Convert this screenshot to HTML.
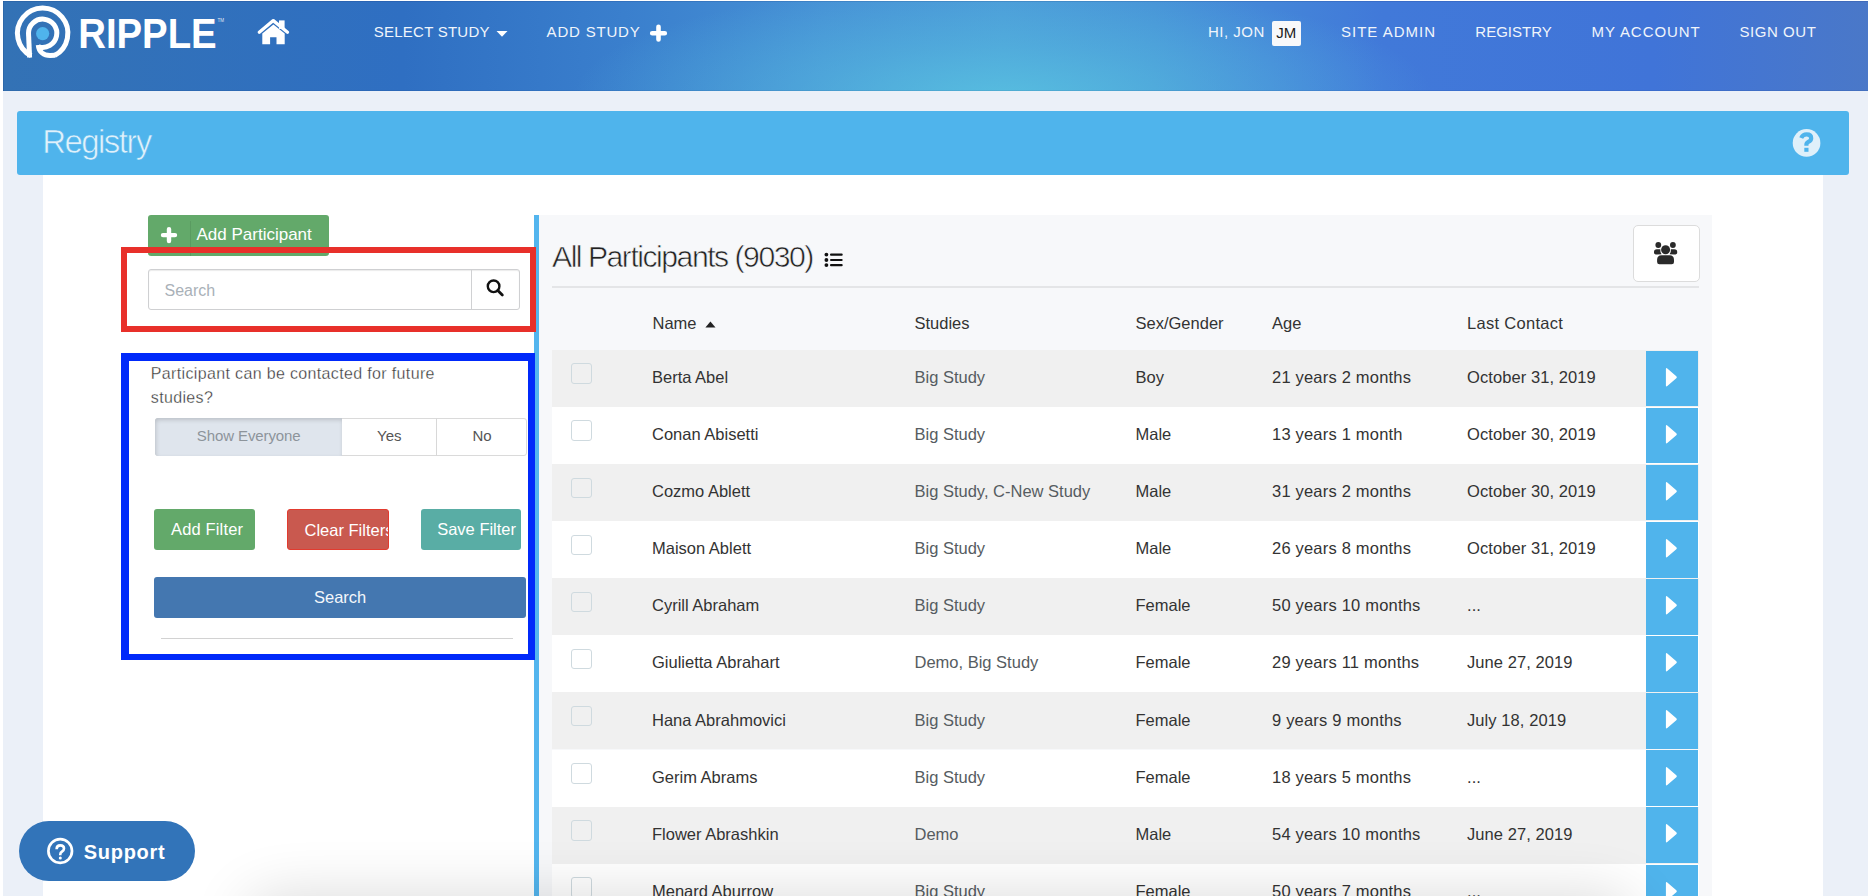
<!DOCTYPE html>
<html><head><meta charset="utf-8">
<style>
*{margin:0;padding:0;box-sizing:border-box}
html,body{width:1868px;height:896px;overflow:hidden;background:#fff;font-family:"Liberation Sans",sans-serif}
.a{position:absolute}
#pagebg{left:3px;top:90px;width:1865px;height:806px;background:#ebf0f8}
#hdr{left:3px;top:1px;width:1865px;height:89.5px;box-shadow:inset 0 1px 0 rgba(0,20,80,0.12),inset 1px 0 0 rgba(0,20,80,0.1),inset 0 -1px 0 rgba(0,20,80,0.08);
 background:
  radial-gradient(ellipse 430px 115px at 1000px 96px, rgba(88,192,224,0.9), rgba(88,192,224,0.45) 45%, rgba(88,192,224,0) 100%),
  linear-gradient(90deg,#3372b5 0px,#2f6fc2 400px,#3a7fcd 620px,#4690d5 820px,#4b9ad8 1000px,#4792d7 1150px,#4179d9 1380px,#4074d8 1650px,#4a78c8 1868px);}
.nav{color:#f0f5fb;font-size:15px;white-space:nowrap;top:23.4px;line-height:18px}
#reg{left:17px;top:111px;width:1832px;height:64px;background:#4fb4ec;border-radius:3px}
#regt{left:42.2px;top:123.2px;font-size:33px;color:#dff1fb;line-height:38px;letter-spacing:-1.55px;white-space:nowrap;-webkit-text-stroke:0.6px #4fb4ec}
#wpanel{left:43px;top:175px;width:1780px;height:721px;background:#fff}
#tpanel{left:539px;top:215px;width:1173px;height:681px;background:#f7f8fa}
#bline{left:534px;top:215px;width:4.5px;height:681px;background:#53b5ee}
#title{left:552px;top:238.6px;font-size:30.2px;line-height:36px;color:#222;letter-spacing:-1.5px;white-space:nowrap;-webkit-text-stroke:0.6px #f7f8fa}
#sep{left:552px;top:286px;width:1147px;height:1.5px;background:#e4e5e7}
#grp{left:1632.5px;top:225px;width:67px;height:57px;background:#fff;border:1px solid #dcdcdc;border-radius:5px}
.th{position:absolute;top:312.7px;font-size:16.5px;line-height:20px;color:#333;white-space:nowrap}
.row{left:552px;width:1147px;height:57.1px}
.odd{background:#f0f0f0}
.even{background:#fff}
.cb{position:absolute;left:19px;top:13.6px;width:20.5px;height:20.5px;border:1px solid #cfdadf;border-radius:3px;background:transparent}
.td{position:absolute;top:17.15px;font-size:16.5px;line-height:20px;color:#333;white-space:nowrap}
.st{color:#565c61}
.arr{position:absolute;left:1094px;top:0.9px;width:52px;height:55.6px;background:#50b4ec}
.arr svg{position:absolute;left:0;top:0}
/* left panel */
#addp{left:147.5px;top:214.7px;width:181.3px;height:41.1px;background:#63a96a;border-radius:3px}
#addp .dv{position:absolute;left:42px;top:6px;width:1px;height:35px;background:#5a9b61}
#addpt{left:196.5px;top:225.3px;font-size:17px;line-height:20px;color:#fff;white-space:nowrap}
#sinput{left:147.5px;top:269.3px;width:372.3px;height:41px;background:#fff;border:1px solid #cfd0d2;border-radius:3px;box-shadow:inset 0 1px 1px rgba(0,0,0,0.08)}
#sinput .dv{position:absolute;left:322px;top:0;width:1px;height:39px;background:#d0d1d3}
#sph{left:164.5px;top:281.1px;font-size:16px;line-height:20px;color:#a9b1b8;white-space:nowrap}
#redbox{left:121px;top:247px;width:414.7px;height:85.4px;border:6.2px solid #e8302a}
#bluebox{left:121.3px;top:352.8px;width:413.5px;height:307px;border:8px solid #0029fa;border-bottom-width:6.5px;border-right-width:7px}
#q1{left:150.8px;top:362.2px;font-size:16px;line-height:23.9px;color:#333;letter-spacing:0.35px;width:330px;-webkit-text-stroke:0.3px #fff}
#tg{left:155.3px;top:417.6px;width:372px;height:38.6px;border:1px solid #dadada;border-radius:3px;background:#fff}
#tg1{left:155.3px;top:417.6px;width:186.3px;height:38.6px;background:#dfe5ed;border-radius:3px 0 0 3px;box-shadow:inset 1px 2px 4px rgba(0,0,0,0.16)}
#tgd{left:436px;top:418px;width:1px;height:37.5px;background:#d8d8d8}
.tgt{position:absolute;top:426.9px;font-size:15px;line-height:18px;white-space:nowrap}
.btn{position:absolute;top:508.9px;height:41.1px;border-radius:3px}
.btnt{position:absolute;top:518.8px;font-size:16.5px;line-height:20px;color:#fff;white-space:nowrap}
#srch{left:153.9px;top:576.8px;width:372.6px;height:40.9px;background:#4477b0;border-radius:3px}
#srcht{left:314px;top:587px;font-size:16.5px;line-height:20px;color:#f4f7fb;white-space:nowrap}
#hr{left:161.4px;top:637.5px;width:351.2px;height:1.2px;background:#d2d2d2}
#support{left:18.6px;top:821.2px;width:176.6px;height:59.7px;background:#3274b9;border-radius:30px}
#supt{left:83.8px;top:839.6px;font-size:20px;font-weight:bold;line-height:24px;color:#fff;letter-spacing:0.7px;white-space:nowrap}
#shadow{left:260px;top:912px;width:1360px;height:30px;border-radius:30px;pointer-events:none;box-shadow:0 0 60px 14px rgba(0,0,0,0.16)}

</style></head><body>
<div class="a" id="pagebg"></div>
<div class="a" id="hdr"></div>
<svg class="a" style="left:0;top:0" width="300" height="70" viewBox="0 0 300 70">
 <g fill="none" stroke="#fff" stroke-width="5">
  <path d="M31.2 55.75 A25.2 25.2 0 1 1 54.5 55.55"/>
  <path d="M28.5 33.3 A14.15 14.15 0 1 1 38.5 46.8"/>
  <path d="M28.5 33 L29.6 57.5"/>
  <path d="M38.3 45 C38.8 52, 44 55.6, 50 55.6 L55 55.2"/>
 </g>
 <circle cx="42.65" cy="33.6" r="6.6" fill="#4fb4ec"/>
 <text x="78.2" y="47.5" font-family="Liberation Sans" font-weight="bold" font-size="42.5" fill="#fff" textLength="138.5" lengthAdjust="spacingAndGlyphs">RIPPLE</text>
 <text x="217.5" y="21.5" font-family="Liberation Sans" font-size="4.6" fill="#fff" fill-opacity="0.85">TM</text>
 <g fill="#fff">
  <path d="M259.3 32.2 L273.3 20.6 L287.5 32.2" fill="none" stroke="#fff" stroke-width="3.3" stroke-linecap="round" stroke-linejoin="round"/>
  <rect x="279" y="20.4" width="5.6" height="8.5"/>
  <path d="M262.3 33.4 L273.4 24.4 L284.7 33.4 V44.2 H276.5 V37.3 H270.1 V44.2 H262.3 Z"/>
 </g>
</svg>
<div class="a nav" style="left:373.7px;letter-spacing:0.25px">SELECT STUDY</div>
<svg class="a" style="left:0;top:0" width="700" height="60"><path d="M496.5 31 H507.5 L502 36.8 Z" fill="#fff"/>
 <path d="M658.5 26.8 V39.5 M652.2 33.2 H664.8" stroke="#fff" stroke-width="4.6" stroke-linecap="round"/></svg>
<div class="a nav" style="left:546.6px;letter-spacing:0.8px">ADD STUDY</div>
<div class="a nav" style="left:1208px;letter-spacing:0.5px">HI, JON</div>
<div class="a" style="left:1271.8px;top:20.7px;width:29.7px;height:25.5px;background:#f8f8fa;border-radius:2px"></div>
<div class="a" style="left:1276.3px;top:23.7px;font-size:15px;line-height:18px;color:#1b1b1b">JM</div>
<div class="a nav" style="left:1341px;letter-spacing:1px">SITE ADMIN</div>
<div class="a nav" style="left:1475.3px">REGISTRY</div>
<div class="a nav" style="left:1591.5px;letter-spacing:0.95px">MY ACCOUNT</div>
<div class="a nav" style="left:1739.5px;letter-spacing:0.55px">SIGN OUT</div>

<div class="a" id="reg"></div>
<div class="a" id="regt">Registry</div>
<svg class="a" style="left:1780px;top:115px" width="60" height="60" viewBox="1780 115 60 60">
 <circle cx="1806.55" cy="142.95" r="13.85" fill="#dff0fa"/>
 <path d="M1801.2 138 Q1802.8 134.4 1806.6 134.4 Q1811.2 134.4 1811.2 138.2 Q1811.2 140.4 1808.3 141.9 Q1806.4 142.9 1806.4 144.8 V145.8" fill="none" stroke="#4fb4ec" stroke-width="4.2"/>
 <rect x="1804.3" y="147.8" width="4.2" height="4" fill="#4fb4ec"/>
</svg>
<div class="a" id="wpanel"></div>
<div class="a" id="tpanel"></div>
<div class="a" id="bline"></div>
<div class="a" id="title">All Participants (9030)</div>
<svg class="a" style="left:820px;top:248px" width="30" height="24" viewBox="820 248 30 24">
 <g fill="#111"><circle cx="826.4" cy="254.6" r="1.9"/><circle cx="826.4" cy="260" r="1.9"/><circle cx="826.4" cy="265.1" r="1.9"/>
 <rect x="830" y="253.5" width="12.7" height="2.2" rx="1"/><rect x="830" y="258.9" width="12.7" height="2.2" rx="1"/><rect x="830" y="264" width="12.7" height="2.2" rx="1"/></g>
</svg>
<div class="a" id="grp"></div>
<svg class="a" style="left:1645px;top:236px" width="40" height="36" viewBox="1645 236 40 36" fill="#2a2a2a">
 <circle cx="1665.6" cy="249.8" r="4.5"/>
 <path d="M1657.1 262 V259.8 Q1657.1 255.2 1661.6 255.2 H1669.6 Q1674 255.2 1674 259.8 V262 Q1674 264.3 1671.7 264.3 H1659.4 Q1657.1 264.3 1657.1 262 Z"/>
 <circle cx="1658.3" cy="245" r="2.9"/><circle cx="1672.9" cy="245" r="2.9"/>
 <path d="M1654 252.8 V251.8 Q1654 249.2 1656.8 249.2 H1660.3 Q1660 252.3 1661.6 254.3 L1657 254.6 Q1654 254.6 1654 252.8 Z"/>
 <path d="M1677.2 252.8 V251.8 Q1677.2 249.2 1674.4 249.2 H1670.9 Q1671.2 252.3 1669.6 254.3 L1674.2 254.6 Q1677.2 254.6 1677.2 252.8 Z"/>
</svg>
<div class="a" id="sep"></div>
<div class="th" style="left:652.5px">Name</div>
<svg class="a" style="left:700px;top:315px" width="20" height="16"><path d="M5.4 12.5 H15.5 L10.45 6.4 Z" fill="#222"/></svg>
<div class="th" style="left:914.5px">Studies</div>
<div class="th" style="left:1135.5px">Sex/Gender</div>
<div class="th" style="left:1272px">Age</div>
<div class="th" style="left:1467px;letter-spacing:0.3px">Last Contact</div>
<div class="a row odd" style="top:349.80px"><div class="cb"></div><div class="td" style="left:100px">Berta Abel</div><div class="td st" style="left:362.5px">Big Study</div><div class="td" style="left:583.5px">Boy</div><div class="td" style="left:720px;letter-spacing:0.2px">21 years 2 months</div><div class="td" style="left:915px;letter-spacing:0.08px">October 31, 2019</div><div class="arr"><svg width="52" height="56" viewBox="0 0 52 56"><path d="M19.9 18 Q19.9 16.3 21.3 17.4 L30.3 25.3 Q31.5 26.3 30.3 27.3 L21.3 35.1 Q19.9 36.3 19.9 34.5 Z" fill="#fff"/></svg></div></div>
<div class="a row even" style="top:406.90px"><div class="cb"></div><div class="td" style="left:100px">Conan Abisetti</div><div class="td st" style="left:362.5px">Big Study</div><div class="td" style="left:583.5px">Male</div><div class="td" style="left:720px;letter-spacing:0.2px">13 years 1 month</div><div class="td" style="left:915px;letter-spacing:0.08px">October 30, 2019</div><div class="arr"><svg width="52" height="56" viewBox="0 0 52 56"><path d="M19.9 18 Q19.9 16.3 21.3 17.4 L30.3 25.3 Q31.5 26.3 30.3 27.3 L21.3 35.1 Q19.9 36.3 19.9 34.5 Z" fill="#fff"/></svg></div></div>
<div class="a row odd" style="top:464.00px"><div class="cb"></div><div class="td" style="left:100px">Cozmo Ablett</div><div class="td st" style="left:362.5px">Big Study, C-New Study</div><div class="td" style="left:583.5px">Male</div><div class="td" style="left:720px;letter-spacing:0.2px">31 years 2 months</div><div class="td" style="left:915px;letter-spacing:0.08px">October 30, 2019</div><div class="arr"><svg width="52" height="56" viewBox="0 0 52 56"><path d="M19.9 18 Q19.9 16.3 21.3 17.4 L30.3 25.3 Q31.5 26.3 30.3 27.3 L21.3 35.1 Q19.9 36.3 19.9 34.5 Z" fill="#fff"/></svg></div></div>
<div class="a row even" style="top:521.10px"><div class="cb"></div><div class="td" style="left:100px">Maison Ablett</div><div class="td st" style="left:362.5px">Big Study</div><div class="td" style="left:583.5px">Male</div><div class="td" style="left:720px;letter-spacing:0.2px">26 years 8 months</div><div class="td" style="left:915px;letter-spacing:0.08px">October 31, 2019</div><div class="arr"><svg width="52" height="56" viewBox="0 0 52 56"><path d="M19.9 18 Q19.9 16.3 21.3 17.4 L30.3 25.3 Q31.5 26.3 30.3 27.3 L21.3 35.1 Q19.9 36.3 19.9 34.5 Z" fill="#fff"/></svg></div></div>
<div class="a row odd" style="top:578.20px"><div class="cb"></div><div class="td" style="left:100px">Cyrill Abraham</div><div class="td st" style="left:362.5px">Big Study</div><div class="td" style="left:583.5px">Female</div><div class="td" style="left:720px;letter-spacing:0.2px">50 years 10 months</div><div class="td" style="left:915px;letter-spacing:0.08px">...</div><div class="arr"><svg width="52" height="56" viewBox="0 0 52 56"><path d="M19.9 18 Q19.9 16.3 21.3 17.4 L30.3 25.3 Q31.5 26.3 30.3 27.3 L21.3 35.1 Q19.9 36.3 19.9 34.5 Z" fill="#fff"/></svg></div></div>
<div class="a row even" style="top:635.30px"><div class="cb"></div><div class="td" style="left:100px">Giulietta Abrahart</div><div class="td st" style="left:362.5px">Demo, Big Study</div><div class="td" style="left:583.5px">Female</div><div class="td" style="left:720px;letter-spacing:0.2px">29 years 11 months</div><div class="td" style="left:915px;letter-spacing:0.08px">June 27, 2019</div><div class="arr"><svg width="52" height="56" viewBox="0 0 52 56"><path d="M19.9 18 Q19.9 16.3 21.3 17.4 L30.3 25.3 Q31.5 26.3 30.3 27.3 L21.3 35.1 Q19.9 36.3 19.9 34.5 Z" fill="#fff"/></svg></div></div>
<div class="a row odd" style="top:692.40px"><div class="cb"></div><div class="td" style="left:100px">Hana Abrahmovici</div><div class="td st" style="left:362.5px">Big Study</div><div class="td" style="left:583.5px">Female</div><div class="td" style="left:720px;letter-spacing:0.2px">9 years 9 months</div><div class="td" style="left:915px;letter-spacing:0.08px">July 18, 2019</div><div class="arr"><svg width="52" height="56" viewBox="0 0 52 56"><path d="M19.9 18 Q19.9 16.3 21.3 17.4 L30.3 25.3 Q31.5 26.3 30.3 27.3 L21.3 35.1 Q19.9 36.3 19.9 34.5 Z" fill="#fff"/></svg></div></div>
<div class="a row even" style="top:749.50px"><div class="cb"></div><div class="td" style="left:100px">Gerim Abrams</div><div class="td st" style="left:362.5px">Big Study</div><div class="td" style="left:583.5px">Female</div><div class="td" style="left:720px;letter-spacing:0.2px">18 years 5 months</div><div class="td" style="left:915px;letter-spacing:0.08px">...</div><div class="arr"><svg width="52" height="56" viewBox="0 0 52 56"><path d="M19.9 18 Q19.9 16.3 21.3 17.4 L30.3 25.3 Q31.5 26.3 30.3 27.3 L21.3 35.1 Q19.9 36.3 19.9 34.5 Z" fill="#fff"/></svg></div></div>
<div class="a row odd" style="top:806.60px"><div class="cb"></div><div class="td" style="left:100px">Flower Abrashkin</div><div class="td st" style="left:362.5px">Demo</div><div class="td" style="left:583.5px">Male</div><div class="td" style="left:720px;letter-spacing:0.2px">54 years 10 months</div><div class="td" style="left:915px;letter-spacing:0.08px">June 27, 2019</div><div class="arr"><svg width="52" height="56" viewBox="0 0 52 56"><path d="M19.9 18 Q19.9 16.3 21.3 17.4 L30.3 25.3 Q31.5 26.3 30.3 27.3 L21.3 35.1 Q19.9 36.3 19.9 34.5 Z" fill="#fff"/></svg></div></div>
<div class="a row even" style="top:863.70px"><div class="cb"></div><div class="td" style="left:100px">Menard Aburrow</div><div class="td st" style="left:362.5px">Big Study</div><div class="td" style="left:583.5px">Female</div><div class="td" style="left:720px;letter-spacing:0.2px">50 years 7 months</div><div class="td" style="left:915px;letter-spacing:0.08px">...</div><div class="arr"><svg width="52" height="56" viewBox="0 0 52 56"><path d="M19.9 18 Q19.9 16.3 21.3 17.4 L30.3 25.3 Q31.5 26.3 30.3 27.3 L21.3 35.1 Q19.9 36.3 19.9 34.5 Z" fill="#fff"/></svg></div></div>

<div class="a" id="addp"><div class="dv"></div></div>
<svg class="a" style="left:155px;top:220px" width="30" height="30" viewBox="155 220 30 30"><path d="M169 229.1 V241.1 M163 235.1 H175" stroke="#fff" stroke-width="4.4" stroke-linecap="round"/></svg>
<div class="a" id="addpt">Add Participant</div>
<div class="a" id="sinput"><div class="dv"></div></div>
<div class="a" id="sph">Search</div>
<svg class="a" style="left:480px;top:272px" width="30" height="30" viewBox="480 272 30 30"><circle cx="493.6" cy="286.3" r="5.8" fill="none" stroke="#111" stroke-width="2.4"/><path d="M497.8 290.5 L502.3 295" stroke="#111" stroke-width="2.8" stroke-linecap="round"/></svg>
<div class="a" id="redbox"></div>

<div class="a" id="q1">Participant can be contacted for future studies?</div>
<div class="a" id="tg"></div>
<div class="a" id="tg1"></div>
<div class="a" id="tgd"></div>
<div class="tgt" style="left:196.8px;color:#8d949b;letter-spacing:-0.1px">Show Everyone</div>
<div class="tgt" style="left:377px;color:#555">Yes</div>
<div class="tgt" style="left:472.5px;color:#555">No</div>
<div class="btn" style="left:153.9px;width:101.3px;background:#63a96a"></div>
<div class="btnt" style="left:171px;letter-spacing:0.15px">Add Filter</div>
<div class="btn" style="left:286.7px;width:102.1px;background:#c9594f;border:1px solid #e23b2f;overflow:hidden"><div class="btnt" style="left:16.8px;top:9.65px">Clear Filters</div></div>
<div class="btn" style="left:420.5px;width:100.7px;background:#59ada5"></div>
<div class="btnt" style="left:437.2px">Save Filter</div>
<div class="a" id="srch"></div>
<div class="a" id="srcht">Search</div>
<div class="a" id="hr"></div>
<div class="a" id="bluebox"></div>

<div class="a" id="shadow"></div>
<div class="a" id="support"></div>
<svg class="a" style="left:40px;top:830px" width="40" height="40" viewBox="40 830 40 40">
 <circle cx="60.2" cy="851" r="11.8" fill="none" stroke="#fff" stroke-width="2.7"/>
 <path d="M56.6 849.2 Q56.6 845.4 60.3 845.4 Q64 845.4 64 848.6 Q64 850.5 62.1 851.5 Q60.3 852.5 60.3 854.3 V855.2" fill="none" stroke="#fff" stroke-width="2.6"/>
 <circle cx="60.3" cy="858" r="1.5" fill="#fff"/>
</svg>
<div class="a" id="supt">Support</div>

</body></html>
